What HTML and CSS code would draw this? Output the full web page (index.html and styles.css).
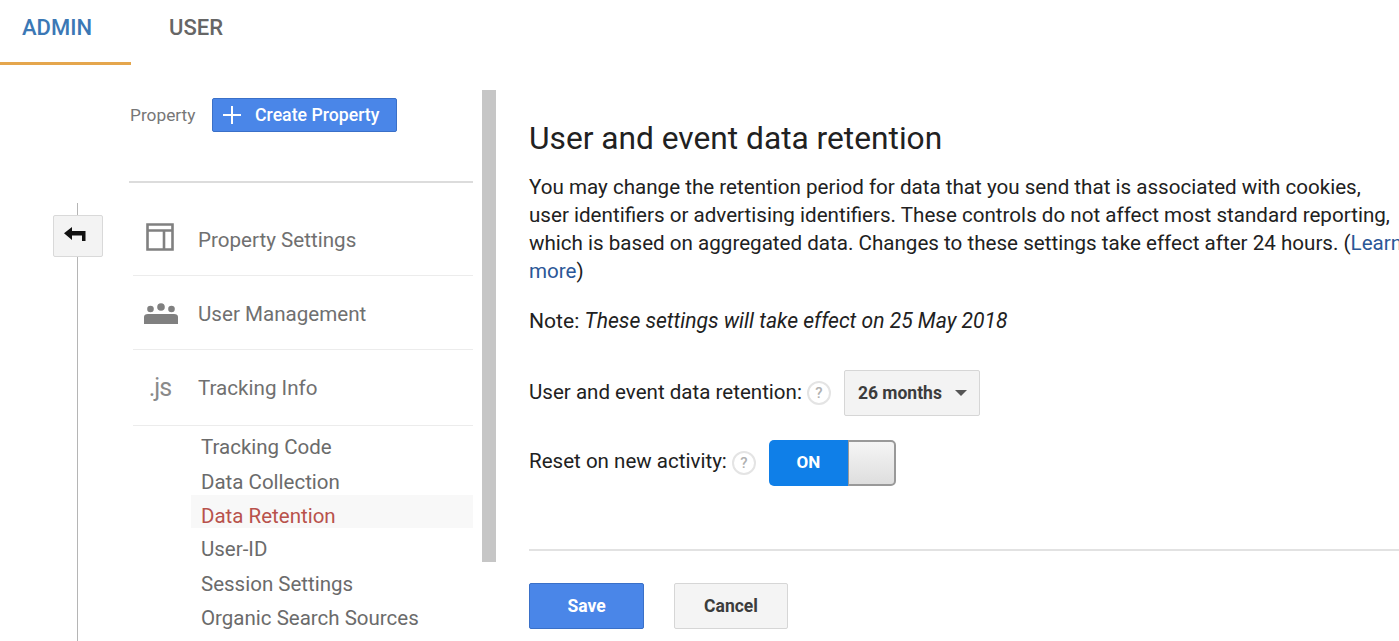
FILE: index.html
```html
<!DOCTYPE html>
<html lang="en">
<head>
<meta charset="utf-8">
<title>Data Retention</title>
<link rel="stylesheet" href="styles.css">
</head>
<body>
<header class="tabs">
  <div class="tab tab-active">ADMIN</div>
  <div class="tab">USER</div>
</header>
<main class="layout">
  <aside class="rail">
    <button class="back" aria-label="Back">
      <svg width="22" height="14" viewBox="0 0 22 14"><path d="M0 6.2 L8 0 V4 H21.5 V14 H18 V8.6 H8 V13 Z" fill="#111"/></svg>
    </button>
  </aside>
  <nav class="nav">
    <div class="prop-head">
      <span class="prop-label">Property</span>
      <button class="create">
        <svg width="20" height="20" viewBox="0 0 20 20"><path d="M10 1V19M1 10H19" stroke="#fff" stroke-width="2"/></svg>
        <span>Create Property</span>
      </button>
    </div>
    <div class="nav-item nav-first">
      <span class="nav-icon nav-icon-box">
        <svg width="28" height="28" viewBox="0 0 28 28"><path d="M1.5 1.5H26.5V26.5H1.5ZM1.5 7.5H26.5M18 7.5V26.5" fill="none" stroke="#808080" stroke-width="2.6"/></svg>
      </span>
      <span>Property Settings</span>
    </div>
    <div class="nav-item nav-second">
      <span class="nav-icon nav-icon-users">
        <svg width="36" height="23" viewBox="0 0 36 23"><g fill="#808080"><circle cx="7.5" cy="7" r="3.3"/><circle cx="18" cy="5" r="3.8"/><circle cx="28.5" cy="7" r="3.3"/><path d="M1 22V15Q1 12 5 12H31Q35 12 35 15V22Z"/></g></svg>
      </span>
      <span>User Management</span>
    </div>
    <div class="nav-item nav-third">
      <span class="nav-icon nav-js">.js</span>
      <span>Tracking Info</span>
    </div>
    <ul class="sub">
      <li class="sub-a">Tracking Code</li>
      <li class="sub-b">Data Collection</li>
      <li class="sub-active">Data Retention</li>
      <li class="sub-c">User-ID</li>
      <li class="sub-d">Session Settings</li>
      <li>Organic Search Sources</li>
    </ul>
  </nav>
  <div class="scrollbar"></div>
  <section class="content">
    <h1 class="title">User and event data retention</h1>
    <p class="desc">You may change the retention period for data that you send that is associated with cookies,<br>user identifiers or advertising identifiers. These controls do not affect most standard reporting,<br>which is based on aggregated data. Changes to these settings take effect after 24 hours. (<a class="link" href="#">Learn<br>more</a>)</p>
    <p class="note">Note: <em>These settings will take effect on 25 May 2018</em></p>
    <div class="row row-retention">
      <span class="lbl">User and event data retention:</span>
      <span class="help">?</span>
      <button class="select"><span>26 months</span><i class="caret"></i></button>
    </div>
    <div class="row row-reset">
      <span class="lbl lbl-reset">Reset on new activity:</span>
      <span class="help">?</span>
      <div class="toggle"><span class="toggle-on">ON</span><span class="toggle-knob"></span></div>
    </div>
    <hr class="rule">
    <div class="actions">
      <button class="btn btn-save">Save</button>
      <button class="btn btn-cancel">Cancel</button>
    </div>
  </section>
</main>
</body>
</html>
```
FILE: styles.css
```css
* { box-sizing: border-box; }
html, body { margin: 0; height: 641px; overflow: hidden; background: #fff; }
body { font-family: Roboto, "Liberation Sans", sans-serif; color: #212121; width: 1399px; }
button { font-family: inherit; cursor: pointer; }

.tabs { display: flex; height: 65px; }
.tab { padding-top: 15px; font-size: 22px; font-weight: 500; line-height: 26px; color: #666; }
.tab-active { width: 131px; padding-left: 22px; margin-right: 38px; color: #3b78b5; border-bottom: 3px solid #e5a64d; }

.layout { display: flex; height: 576px; }
.rail { position: relative; width: 129px; flex: none; padding: 150px 0 0 53px; }
.rail::before { content: ""; position: absolute; left: 77px; top: 138px; bottom: 0; width: 1px; background: #b5b5b5; }
.back { position: relative; display: block; width: 50px; height: 42px; padding: 0; background: #f3f3f3; border: 1px solid #d9d9d9; border-radius: 2px; }
.back svg { display: block; margin: -5px 0 0 10px; }

.nav { width: 344px; flex: none; padding-top: 33px; }
.prop-head { display: flex; align-items: center; height: 85px; padding-bottom: 50px; border-bottom: 2px solid #dcdcdc; font-size: 17.3px; color: #777; }
.prop-label { width: 83px; padding-left: 1px; flex: none; }
.create { display: flex; align-items: center; flex: none; width: 185px; height: 34px; padding: 0 0 0 9px; background: #4a86e8; border: 1px solid #3a70c8; border-radius: 2px; color: #fff; font-size: 17.7px; font-weight: 500; }
.create span { margin-left: 13px; }

.nav-item { display: flex; align-items: center; height: 74px; margin-left: 4px; border-bottom: 1px solid #ececec; font-size: 20.6px; color: #707070; }
.nav-first { height: 93px; padding-top: 21px; }
.nav-second { padding-top: 2px; }
.nav-third { height: 76px; }
.nav-icon { width: 62px; margin: 0 7px 0 -4px; display: flex; justify-content: center; flex: none; }
.nav-icon-box { margin-top: -5px; }
.nav-icon-users { width: 64px; margin-right: 5px; }
.nav-js { font-size: 25px; letter-spacing: -1px; color: #8a8a8a; }

.sub { list-style: none; margin: 0; padding: 0; font-size: 20.5px; color: #6b6b6b; }
.sub li { margin-left: 62px; padding-left: 10px; line-height: 34px; }
.sub .sub-a { margin-top: 4px; }
.sub .sub-b { margin-top: 1px; height: 30px; }
.sub .sub-active { height: 33px; padding-top: 4px; color: #b8524c; background: #f8f8f8; }
.sub .sub-c { margin-top: 5px; line-height: 33px; }
.sub .sub-d { margin-top: 1px; }

.scrollbar { width: 14px; height: 472px; margin: 25px 0 0 9px; flex: none; background: #c6c6c6; }

.content { flex: 1; min-width: 0; margin-left: 33px; padding-top: 54px; font-size: 20.55px; }
.title { margin: 0 0 14px; font-size: 31.7px; font-weight: 400; line-height: 40px; color: #212121; }
.desc { margin: 0; font-size: 20.6px; line-height: 28px; white-space: nowrap; }
.link { color: #2b5797; text-decoration: none; }
.note { margin: 22px 0 0; font-size: 21.1px; line-height: 28px; }
.row { display: flex; align-items: center; }
.row-retention { margin-top: 35px; height: 46px; }
.row-reset { margin-top: 24px; height: 46px; }
.lbl { margin-bottom: 3px; }
.lbl-reset { margin-bottom: 5px; }
.help { width: 24px; height: 24px; margin-left: 5px; flex: none; border: 2px solid #e4e4e4; border-radius: 50%; text-align: center; font-size: 15px; line-height: 20px; font-weight: 500; color: #b0b0b0; }
.select { display: flex; align-items: center; flex: none; width: 136px; height: 46px; margin-left: 13px; padding: 0 0 0 13px; background: #f3f3f3; border: 1px solid #d6d6d6; border-radius: 2px; font-size: 17.5px; font-weight: 700; color: #3c3c3c; }
.caret { margin-left: 13px; border: 6px solid transparent; border-top-color: #555; border-bottom: 0; }
.toggle { display: flex; flex: none; width: 127px; height: 46px; margin-left: 13px; }
.toggle-on { width: 79px; background: #0f7fe8; border-radius: 5px 0 0 5px; color: #fff; font-size: 17px; font-weight: 700; line-height: 44px; text-align: center; }
.toggle-knob { flex: 1; background: linear-gradient(#f5f5f5, #dedede); border: 2px solid #999; border-left-width: 1px; border-radius: 0 5px 5px 0; }
.rule { margin: 63px 0 0; border: 0; border-top: 2px solid #e2e2e2; }
.actions { display: flex; gap: 30px; margin-top: 32px; }
.btn { height: 46px; border-radius: 2px; font-size: 17.5px; font-weight: 700; padding: 0; }
.btn-save { width: 115px; background: #4a86e8; border: 1px solid #3a70c8; color: #fff; }
.btn-cancel { width: 114px; background: #f4f4f4; border: 1px solid #d6d6d6; color: #3c3c3c; }
```
